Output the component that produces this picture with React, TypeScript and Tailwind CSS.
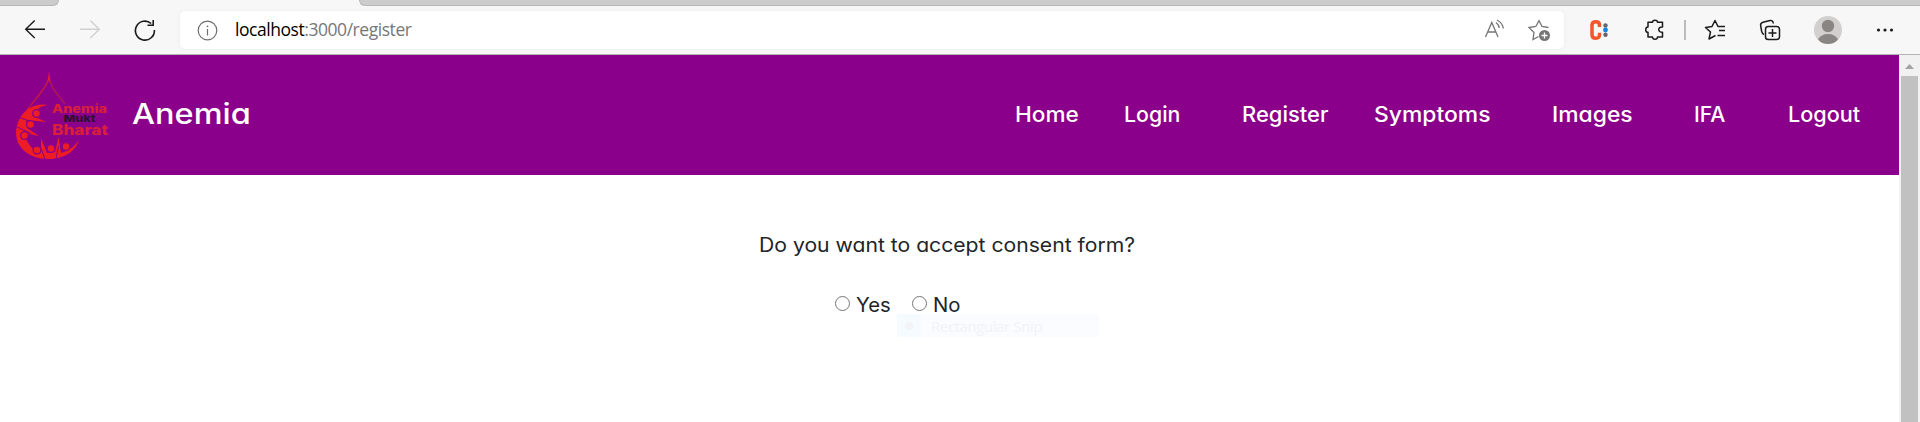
import React from "react";

const pop = "font-['Inter','Liberation_Sans',sans-serif] [font-feature-settings:'cv11'] whitespace-nowrap";

function Logo() {
  return (
    <svg className="ml-3 mt-[13px] h-[95px] w-[100px] shrink-0" viewBox="12 68 100 95" fill="none">
      <path d="M49 78C47 87 37 97 27 110" stroke="#c41a44" strokeWidth="1.400" />
      <path d="M49 78C51 88 58 95 65 104" stroke="#b81850" strokeWidth="1.200" />
      <path d="M49 71L47.300 83L49 80L50.700 83Z" fill="#e01d30" />
      <path d="M48 105C38 103 28 107 22 115C15 124 14 137 20 146C27 156 38 159 49 159C64 159 76 151 79 140C75 146 69 151 61 153L58.500 137L55 152L47 153L41 138L41 153C33 151 27 144 24 133L39 136L27 128L26 120L46 122L33 116C35 110 40 106 48 105Z" fill="#ee1c25" />
      <path d="M19 117.500L31 121.500M16 126.500L31 133.500M40.500 147L45 159M58.500 146L56 159" stroke="#8b008b" strokeWidth="1" />
      <g fill="#ee1c25" stroke="#8b008b" strokeWidth="1.300">
        <circle cx="36.500" cy="113.500" r="3.900" />
        <circle cx="30.500" cy="124.500" r="3.900" />
        <circle cx="24.500" cy="135.500" r="3.900" />
        <circle cx="37" cy="150" r="3.900" />
        <circle cx="51" cy="148.500" r="3.900" />
        <circle cx="66" cy="146.500" r="3.900" />
      </g>
      <g fontFamily="Inter, DejaVu Sans, sans-serif" fontWeight="800">
        <text x="52" y="113" fontSize="11.500" fill="#d81f3c" textLength="55" lengthAdjust="spacingAndGlyphs">Anemia</text>
        <text x="63.500" y="121.500" fontSize="9.500" fill="#2b1230" textLength="32" lengthAdjust="spacingAndGlyphs">Mukt</text>
        <text x="52" y="134.500" fontSize="14" fill="#d81f3c" textLength="56" lengthAdjust="spacingAndGlyphs">Bharat</text>
      </g>
    </svg>
  );
}

function Toolbar() {
  return (
    <div className="flex h-[55px] flex-col border-b border-[#b4b4b4] bg-[#f7f7f7]">
      <div className="flex h-[6px] shrink-0 justify-between">
        <div className="w-[59px] rounded-br-[6px] border-b border-r border-[#b8b8b8] bg-[#cccccc]" />
        <div className="w-[1561px] rounded-bl-[6px] border-b border-l border-[#b8b8b8] bg-[#cccccc]" />
      </div>
      <div className="flex h-[48px] items-start pt-[5px]">
        <svg className="h-[38px] w-[180px] shrink-0" viewBox="0 11 180 38" fill="none" strokeWidth="1.4">
          <path d="M45 29.300H26M34.700 20.500L25.700 29.300L34.700 38" stroke="#1b1b1b" />
          <path d="M80 29.300H99M90.300 20.500L99.300 29.300L90.300 38" stroke="#d0d0d0" />
          <path d="M151.200 23.500A9.500 9.500 0 1 0 154.400 30M153.200 20V25.300H147.500" stroke="#1b1b1b" strokeWidth="1.600" />
        </svg>
        <div className="flex h-[38px] w-[1384px] shrink-0 items-center rounded-[5px] bg-white shadow-[0_0_4px_rgba(0,0,0,0.06)]">
          <svg className="ml-[17px] size-[21px]" viewBox="0 0 21 21" fill="none">
            <circle cx="10.500" cy="10.500" r="9.300" stroke="#6e6e6e" strokeWidth="1.200" />
            <path d="M10.500 9V15.500" stroke="#6e6e6e" strokeWidth="1.200" />
            <circle cx="10.500" cy="6.300" r="0.900" fill="#6e6e6e" />
          </svg>
          <div className="mb-[2px] ml-[17px] whitespace-nowrap font-['Open_Sans','Noto_Sans',sans-serif] text-[17.500px] leading-[24px] tracking-[-0.450px] text-[#777777]">
            <span className="text-black">localhost</span>:3000/register
          </div>
          <svg className="ml-auto mr-[12px] h-[38px] w-[70px]" viewBox="1482 11 70 38" fill="none" stroke="#767676" strokeWidth="1.300">
            <path d="M1485.500 37L1491.800 22.500L1498 37M1487.800 32H1496" />
            <path d="M1496 22.500C1498 24 1499 25.500 1499.300 28M1497 20C1501 22 1502.800 25 1503.300 28.500" />
            <path d="M1538.500 36.500L1533 39.500L1534 32.500L1529 27.500L1535.800 26.500L1539 20.700L1542 26.500L1548.500 27.500" />
            <circle cx="1544.500" cy="35.500" r="5.500" fill="#767676" stroke="none" />
            <path d="M1541.500 35.500H1547.500M1544.500 32.500V38.500" stroke="#fff" />
          </svg>
        </div>
        <svg className="h-[38px] w-[356px] shrink-0" viewBox="1564 11 356 38" fill="none" stroke="#1b1b1b" strokeWidth="1.500" strokeLinejoin="round">
          <path d="M1599.500 27V25Q1599.500 21.700 1595.800 21.700T1592 25V34.500Q1592 38.300 1595.800 38.300T1599.500 34.500V32.800" stroke="#f4562c" strokeWidth="3.500" />
          <circle cx="1605.500" cy="25.500" r="2.200" fill="#666" stroke="none" />
          <circle cx="1605.500" cy="30" r="2.400" fill="#1683e0" stroke="none" />
          <circle cx="1605.500" cy="34.700" r="2.200" fill="#666" stroke="none" />
          <path d="M1648 22.300H1652.500C1652.500 19.500 1657.500 19.500 1657.500 22.300H1662.500V27C1657.500 26.500 1657.500 32.500 1662.500 32.300V37H1657.500C1657.500 40 1652.500 40 1652.500 37H1648V32.300C1645 32.300 1645 27 1648 27Z" />
          <path d="M1685 20V40" stroke="#bcbcbc" strokeWidth="2" />
          <path d="M1715.500 35.500L1709 39L1710.500 32L1705.500 27.500L1712 26.500L1715 20.500L1718 26.500H1725M1719 30.500H1725M1717.500 35.500H1725" />
          <rect x="1765.500" y="26.500" width="14" height="13" rx="2.800" />
          <path d="M1768.500 33H1776.500M1772.500 29V37M1764 34.500C1762.500 34 1762 32.500 1761.700 31.500L1760.700 26C1760.200 24 1761 22.800 1763 22.300L1770 20.500C1772 20 1773 21.500 1773.500 23.500" />
          <circle cx="1828" cy="30" r="14" fill="#d2d0ce" stroke="none" />
          <circle cx="1828" cy="26" r="6.200" fill="#8a8683" stroke="none" />
          <path d="M1818 39.500Q1821 34 1828 34T1838 39.500Q1834 44 1828 44T1818 39.500Z" fill="#8a8683" stroke="none" />
          <g fill="#1b1b1b" stroke="none">
            <circle cx="1878.500" cy="30" r="1.600" />
            <circle cx="1885" cy="30" r="1.600" />
            <circle cx="1891.500" cy="30" r="1.600" />
          </g>
        </svg>
      </div>
    </div>
  );
}

function Header() {
  return (
    <header className="flex h-[120px] bg-[#8b008b] text-white">
      <Logo />
      <div className={`${pop} ml-[20px] mt-[39px] origin-left scale-x-[1.12] text-[29px] font-medium leading-[40px]`}>Anemia</div>
      <nav className={`${pop} ml-auto mr-[37px] mt-[44px] flex text-[21px] font-medium leading-[32px]`}>
        <a className="w-[109px] origin-left scale-x-[1.075]">Home</a>
        <a className="w-[118px] origin-left scale-x-[1.015]">Login</a>
        <a className="w-[132px] origin-left scale-x-[1.045]">Register</a>
        <a className="w-[178px] origin-left scale-x-[1.090]">Symptoms</a>
        <a className="w-[142px] origin-left scale-x-[1.090]">Images</a>
        <a className="w-[94px] origin-left scale-x-[1.010]">IFA</a>
        <a className="w-[74px] origin-left scale-x-[1.030]">Logout</a>
      </nav>
    </header>
  );
}

function Radio({ label }: { label: string }) {
  return (
    <label className="flex w-[77px] items-center">
      <span className="mb-[3px] size-[15px] rounded-full border border-[#767676] bg-white" />
      <span className="ml-[6px] origin-left scale-x-[1.040]">{label}</span>
    </label>
  );
}

export default function App() {
  return (
    <div className="h-[422px] w-[1920px] overflow-hidden bg-white">
      <Toolbar />
      <div className="flex h-[367px]">
        <div className="flex w-[1899px] flex-col">
          <Header />
          <main className={`${pop} flex flex-col text-[19.500px] leading-[30px] text-[#212529]`}>
            <p className="ml-[759px] mt-[55px] w-[380px] origin-left scale-x-[1.085]">Do you want to accept consent form?</p>
            <div className="ml-[835px] mt-[30px] flex">
              <Radio label="Yes" />
              <Radio label="No" />
            </div>
            <div className="ml-[897px] mt-[-6px] flex h-[23px] w-[202px] items-center bg-[#fafcff]">
              <div className="flex h-full w-[24px] items-center justify-center bg-[#f6fbff]">
                <span className="size-[8px] rounded-full bg-[#f2f4f7]" />
              </div>
              <span className="ml-[10px] font-['Open_Sans',sans-serif] text-[15px] tracking-[-0.400px] text-[#f2f3f5]">Rectangular Snip</span>
            </div>
          </main>
        </div>
        <div className="flex w-[21px] flex-col items-center bg-[#f1f1f1]">
          <svg className="mt-[9px] h-[5px] w-[9px]" viewBox="0 0 9 5"><path d="M4.500 0L9 5H0Z" fill="#a3a3a3" /></svg>
          <div className="mt-[7px] h-[346px] w-[17px] bg-[#c1c1c1]" />
        </div>
      </div>
    </div>
  );
}
